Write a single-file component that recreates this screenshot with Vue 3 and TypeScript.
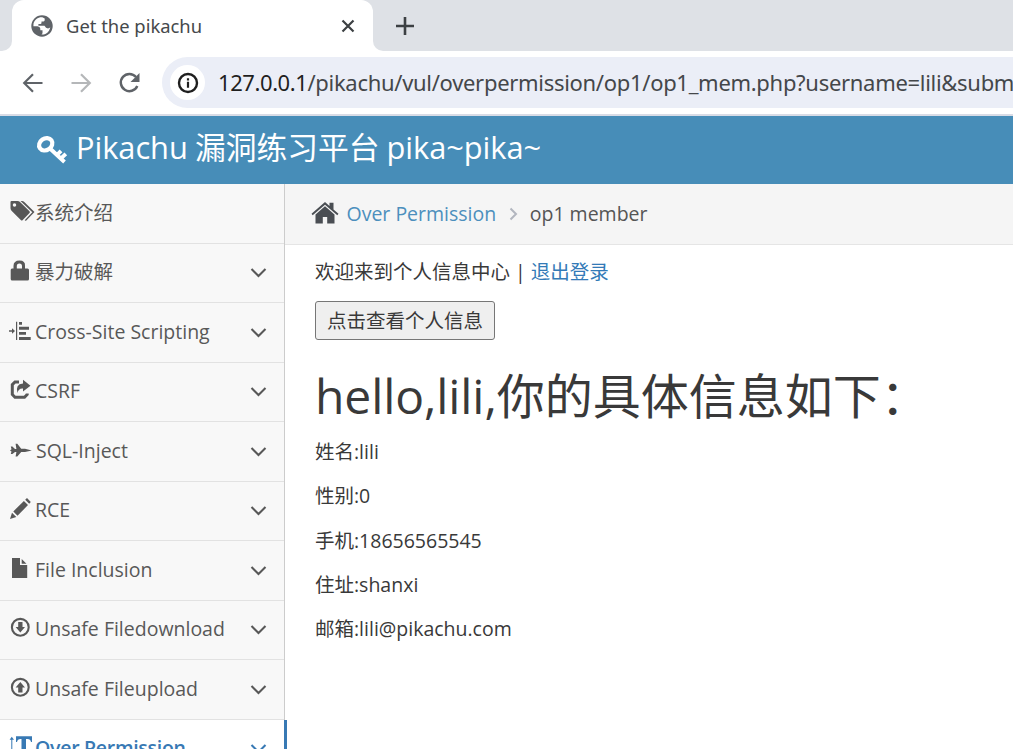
<script setup lang="ts">
interface MenuItem {
  label: string
  icon: string
  expandable: boolean
  active?: boolean
  cls?: string
}

const menu: MenuItem[] = [
  { label: '系统介绍', icon: 'tags', expandable: false },
  { label: '暴力破解', icon: 'lock', expandable: true },
  { label: 'Cross-Site Scripting', icon: 'indent', expandable: true },
  { label: 'CSRF', icon: 'share', expandable: true },
  { label: 'SQL-Inject', icon: 'plane', expandable: true, cls: 'shifted' },
  { label: 'RCE', icon: 'pencil', expandable: true },
  { label: 'File Inclusion', icon: 'file', expandable: true },
  { label: 'Unsafe Filedownload', icon: 'down', expandable: true },
  { label: 'Unsafe Fileupload', icon: 'up', expandable: true },
  { label: 'Over Permission', icon: 'text', expandable: true, active: true },
]

const details = ['姓名:lili', '性别:0', '手机:18656565545', '住址:shanxi', '邮箱:lili@pikachu.com']
</script>

<template>
  <div class="window">
    <div class="tabstrip">
      <div class="left-edge"></div>
      <div class="tab">
        <svg class="globe" width="22" height="22" viewBox="0 0 22 22">
          <circle cx="11" cy="11" r="10.7" fill="#5f6368" />
          <path d="M11.3 2.3C7 2 3.600 4.700 2.500 8.500L2.400 11.300H6.500Q9 11.500 9.300 13.500V15.200H11.500V18.200L10.500 19.600Q15.500 19.600 18 15.700L19.300 12.500L17 13.500L15 12.800L13.500 10.800H7.400V9H9.500Q10.500 9 10.500 7.500V6.500H12.500Q13.700 6.200 13.700 5V3.500Z" fill="#fff" />
        </svg>
        <span class="tab-title">Get the pikachu</span>
        <svg class="close" width="14" height="14" viewBox="0 0 14 14"><path d="M1.500 1.500 12.500 12.500M12.500 1.500 1.500 12.500" stroke="#3c4043" stroke-width="2.200" /></svg>
      </div>
      <div class="strip-rest">
        <svg width="18" height="18" viewBox="0 0 18 18"><path d="M9 0V18M0 9H18" stroke="#3c4043" stroke-width="2.600" /></svg>
      </div>
    </div>

    <div class="toolbar">
      <svg class="nav" width="150" height="26" viewBox="0 0 150 26">
        <path d="M42.500 13H24M33 4.200 24.200 13 33 21.800" fill="none" stroke="#5f6368" stroke-width="2.200" />
        <path d="M71.500 13H90M81 4.200 89.800 13 81 21.800" fill="none" stroke="#b5b7b9" stroke-width="2.200" />
        <path d="M136 7A8.600 8.600 0 1 0 137.300 16" fill="none" stroke="#5f6368" stroke-width="2.400" />
        <path d="M139.500 3V12H130.500Z" fill="#5f6368" />
      </svg>
      <div class="omnibox">
        <div class="info">
          <svg width="22" height="22" viewBox="0 0 22 22"><circle cx="11" cy="11" r="9" fill="none" stroke="#1f1f1f" stroke-width="2.400" /><path d="M11 9.800V15.800M11 6.200V8.400" stroke="#1f1f1f" stroke-width="2.200" /></svg>
        </div>
        <span class="url"><b>127.0.0.1</b><span class="path">/pikachu/vul/overpermission/op1/op1_mem.php?username=lili&amp;subm</span></span>
      </div>
    </div>

    <header class="navbar">
      <svg class="key" width="32" height="30" viewBox="0 0 32 30">
        <ellipse cx="9.700" cy="9.300" rx="7" ry="5.800" transform="rotate(-35 9.700 9.300)" fill="none" stroke="#fff" stroke-width="4.200" />
        <path d="M14 13.500 28.500 27M21 20 25 15.800M25 23.300 29.800 18.800" fill="none" stroke="#fff" stroke-width="3.900" />
      </svg>
      <h2 class="brand">Pikachu 漏洞练习平台 pika~pika~</h2>
    </header>

    <div class="body">
      <nav class="sidebar">
        <a v-for="item in menu" :key="item.label" class="item" :class="{ active: item.active }">
          <svg class="icon" width="26" height="24" viewBox="0 0 26 24">
            <g v-if="item.icon === 'tags'">
              <path fill-rule="evenodd" d="M1.500 2Q1.500 1 2.500 1H8.500Q10 1 11 2L20.500 11.300Q21.300 12.200 20.500 13L13.500 20.200Q12.700 20.900 11.800 20L2.500 10.700Q1.500 9.700 1.500 8.300ZM5.500 3.200A1.700 1.700 0 1 0 5.500 6.700A1.700 1.700 0 1 0 5.500 3.200Z" />
              <path d="M11.500 1H13Q14.300 1 15.300 2L25.500 12L17.300 20.400Q16.500 21 15.700 20.300L23.300 12.200Z" />
            </g>
            <path v-else-if="item.icon === 'lock'" fill-rule="evenodd" d="M1.700 11Q1.700 9.500 3 9.500H4.500V7Q4.500 1.500 10.500 1.500T16 7V9.500H18.500Q20 9.500 20 11V20Q20 21.500 18.500 21.500H3.200Q1.700 21.500 1.700 20ZM7.800 9.500H13V7.300Q13 4.600 10.400 4.600T7.800 7.300Z" />
            <path v-else-if="item.icon === 'indent'" d="M0 11.300H3V9.300L6 12 3 14.700V12.700H0ZM7 2.800H8.200V21H7ZM10 3H13V5.700H10ZM10 7.800H20V10.800H10ZM10 13H17V15.800H10ZM10 18H21.700V21H10Z" />
            <g v-else-if="item.icon === 'share'">
              <path d="M10 4H6L3.300 6.700V16.500L6 19.200H15.500L18.200 16.500V15.500" fill="none" stroke="currentColor" stroke-width="3" />
              <path d="M14 1.700 21.500 7.800 14 13.500V10.500Q9.500 10 8.500 15Q6 6 14 5.500Z" />
            </g>
            <path v-else-if="item.icon === 'plane'" d="M1.800 8.500H3.400L6 11H7.400L6.600 5.800H8.300L12.200 10.800H16L22.800 12.400 16 13.900H12.200L8.300 18.500H6.600L7.400 14H6L3.400 16H1.800L2.500 13.400 1 12.400 2.500 11.300Z" />
            <path v-else-if="item.icon === 'pencil'" d="M1 22 3 15.700 7.300 20ZM4.300 14.400 14.900 4 19 8.100 8.500 18.700ZM16.200 2.800 18 1.100 21.800 4.900 20.200 6.800Z" />
            <path v-else-if="item.icon === 'file'" d="M3 1H11V8H18.200V21H3ZM12.700 2 17.500 6.700H12.700Z" />
            <g v-else-if="item.icon === 'down'"><circle cx="11.300" cy="11.300" r="8.400" fill="none" stroke="currentColor" stroke-width="2.100" /><path d="M9.200 6H13.500V11H16L11.300 16.500 6.600 11H9.200Z" /></g>
            <g v-else-if="item.icon === 'up'"><circle cx="11.300" cy="11.300" r="8.400" fill="none" stroke="currentColor" stroke-width="2.100" /><path d="M9.200 16.500H13.500V11.500H16L11.300 6 6.600 11.500H9.200Z" /></g>
            <path v-else d="M2.800 1.700 5 4.700H3.300V20H2.300V4.700H.6ZM7 1.200H23V7H22Q21.500 4 18.500 4H17V22H12.500V4H11.500Q8.500 4 8 7H7Z" />
          </svg>
          <span class="label" :class="item.cls">{{ item.label }}</span>
          <svg v-if="item.expandable" class="chev" width="17" height="12" viewBox="0 0 17 12"><path d="M1.500 2 8.500 9 15.500 2" fill="none" stroke="currentColor" stroke-width="2.100" /></svg>
        </a>
      </nav>

      <main class="content">
        <div class="crumbs">
          <svg class="home" width="28" height="24" viewBox="0 0 28 24"><path d="M14 1 18.500 5V1.800H22.500V8.500L27.500 12.800 26.300 14.300 14 3.800 1.700 14.300.5 12.800Z" /><path d="M14 5.300 23.500 13.500V22.500H16.200V16H11.800V22.500H4.500V13.500Z" /></svg>
          <a class="crumb-link">Over Permission</a>
          <svg class="sep" width="9" height="14" viewBox="0 0 9 14"><path d="M1.500 1.500 7 7 1.500 12.500" fill="none" stroke="#b2b6bf" stroke-width="2" /></svg>
          <span class="crumb-cur">op1 member</span>
        </div>
        <section class="page">
          <p class="welcome">欢迎来到个人信息中心 | <a>退出登录</a></p>
          <button>点击查看个人信息</button>
          <h1><span class="hello">hello,lili,</span>你的具体信息如下：</h1>
          <p v-for="d in details" :key="d" class="detail">{{ d }}</p>
        </section>
      </main>
    </div>
  </div>
</template>

<style>
body { margin: 0; overflow: hidden; }
</style>

<style scoped>
.window { width: 1013px; height: 749px; overflow: hidden; background: #fff; font-family: "Open Sans", "Noto Sans CJK SC", sans-serif; font-size: 19.5px; color: #393939; box-sizing: border-box; }
.tabstrip { display: flex; height: 51px; }
.left-edge { width: 12px; background: #dee1e6; border-bottom-right-radius: 10px; }
.tab { position: relative; width: 361px; display: flex; align-items: center; box-sizing: border-box; padding: 0 18px 0 19px; background: #fff; }
.tab::before { content: ""; position: absolute; inset: 0; z-index: 0; background: #dee1e6; clip-path: inset(0 0 30px 0); }
.tab::after { content: ""; position: absolute; inset: 0; background: #fff; border-radius: 12px 12px 0 0; }
.tab > * { position: relative; z-index: 1; }
.tab-title { margin-left: 13px; flex: 1; font-family: "Noto Sans", sans-serif; font-size: 18.400px; line-height: 50px; color: #45484b; white-space: nowrap; }
.strip-rest { flex: 1; display: flex; align-items: center; padding-left: 23px; background: #dee1e6; border-bottom-left-radius: 10px; }
.toolbar { height: 63px; display: flex; align-items: center; border-bottom: 2px solid #d9dce6; }
.nav { flex: none; width: 150px; margin-right: 12px; }
.omnibox { flex: 1; height: 51px; border-radius: 26px 0 0 26px; background: #ebeef7; display: flex; align-items: center; padding-left: 8px; overflow: hidden; }
.info { flex: none; width: 35px; height: 35px; border-radius: 50%; background: #fff; display: flex; align-items: center; justify-content: center; }
.url { margin: 0 0 2px 13px; white-space: nowrap; font-family: "Noto Sans", sans-serif; font-size: 22px; letter-spacing: -0.3px; color: #44474a; }
.url b { font-weight: 400; letter-spacing: -0.42px; color: #1f1f1f; }
.navbar { height: 68px; background: #478db8; display: flex; align-items: center; padding-left: 36px; box-sizing: border-box; }
.key { flex: none; }
.brand { margin: 0 0 6px 8px; font-weight: 400; font-size: 30.800px; line-height: 60px; letter-spacing: -0.05px; word-spacing: -0.8px; color: #fff; white-space: nowrap; }
.body { display: flex; height: 565px; }
.sidebar { flex: none; width: 284px; box-sizing: content-box; padding-top: 0.400px; border-right: 1px solid #ccc; background: #f8f8f8; }
.item { box-sizing: border-box; height: 59.500px; display: flex; align-items: flex-start; border-bottom: 1px solid #e2e2e2; padding: 15.200px 17px 0 9px; color: #585858; fill: currentColor; }
.icon { flex: none; margin-top: 0.400px; }
.label { flex: 1; line-height: 26px; white-space: nowrap; }
.label.shifted { padding-left: 1px; }
.chev { margin-top: 8px; }
.item.active { background: #fff; color: #3879b4; font-weight: 600; letter-spacing: -0.28px; width: 287px; border-right: 3px solid #3879b4; position: relative; }
.content { flex: 1; min-width: 0; }
.crumbs { box-sizing: border-box; height: 61px; background: #f5f5f5; border-bottom: 1px solid #e5e5e5; display: flex; align-items: center; padding: 0 0 2px 25.500px; white-space: nowrap; color: #555; }
.home { fill: #4a4e53; }
.crumb-link { color: #4c8fbd; margin-left: 8px; }
.sep { margin: 2px 11.500px 0 13px; }
.page { padding: 12px 30px 0; }
p { margin: 0; line-height: 30px; white-space: nowrap; }
.welcome a { color: #337ab7; }
button { display: block; margin-top: 14px; width: 180px; height: 39px; padding: 0; font: inherit; color: #393939; background: #efefef; border: 1px solid #767676; border-radius: 3px; line-height: 36px; }
h1 { margin: 22px 0 8px; font-size: 48px; font-weight: 400; line-height: 67px; white-space: nowrap; }
.hello { letter-spacing: -0.1px; }
.detail { height: 44.250px; }
</style>
